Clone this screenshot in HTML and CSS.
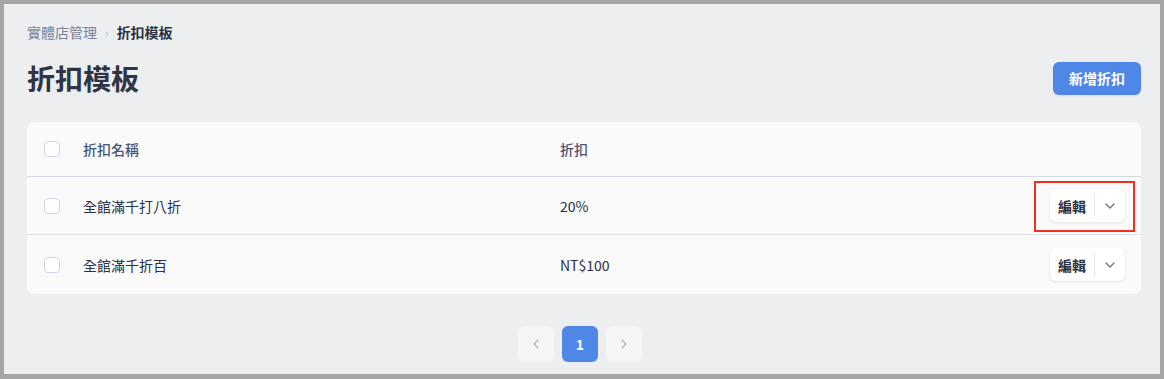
FILE: index.html
```html
<!DOCTYPE html>
<html>
<head>
    <meta charset="UTF-8">
    <title>折扣模板</title>
    <link rel="stylesheet" href="styles.css">
</head>
<body>
    <div class="frame">
        <div class="page">
            <div class="breadcrumb">
                <span class="crumb">實體店管理</span>
                <span class="crumb-sep">›</span>
                <span class="crumb current">折扣模板</span>
            </div>
            <div class="page-head">
                <h1 class="title">折扣模板</h1>
                <button class="btn-primary">新增折扣</button>
            </div>

            <div class="card">
                <div class="row head">
                    <span class="check"></span>
                    <span class="cell">折扣名稱</span>
                    <span class="cell">折扣</span>
                    <span></span>
                </div>
                <div class="row">
                    <span class="check"></span>
                    <span class="cell">全館滿千打八折</span>
                    <span class="cell">20%</span>
                    <div class="actions highlight">
                        <button class="act-main">編輯</button>
                        <button class="act-more">
                            <svg width="10" height="6" viewBox="0 0 10 6"><path d="M1 1l4 4 4-4" fill="none" stroke="#6b7280" stroke-width="1.3" stroke-linecap="round" stroke-linejoin="round"/></svg>
                        </button>
                    </div>
                </div>
                <div class="row">
                    <span class="check"></span>
                    <span class="cell">全館滿千折百</span>
                    <span class="cell">NT$100</span>
                    <div class="actions">
                        <button class="act-main">編輯</button>
                        <button class="act-more">
                            <svg width="10" height="6" viewBox="0 0 10 6"><path d="M1 1l4 4 4-4" fill="none" stroke="#6b7280" stroke-width="1.3" stroke-linecap="round" stroke-linejoin="round"/></svg>
                        </button>
                    </div>
                </div>
            </div>

            <div class="pager">
                <button class="pg">
                    <svg width="6" height="10" viewBox="0 0 6 10"><path d="M5 1L1 5l4 4" fill="none" stroke="#b4b9c6" stroke-width="1.3" stroke-linecap="round" stroke-linejoin="round"/></svg>
                </button>
                <button class="pg active">1</button>
                <button class="pg">
                    <svg width="6" height="10" viewBox="0 0 6 10"><path d="M1 1l4 4-4 4" fill="none" stroke="#b4b9c6" stroke-width="1.3" stroke-linecap="round" stroke-linejoin="round"/></svg>
                </button>
            </div>
        </div>
    </div>
</body>
</html>
```

FILE: styles.css
```css
html, body{
    margin:0;
    padding:0;
}
body{
    font-family:"Noto Sans CJK TC", "Noto Sans", sans-serif;
    color:#2d3142;
    background:#a6a6a6;
}
button{
    font-family:inherit;
    border:0;
    cursor:pointer;
    padding:0;
}
.frame{
    box-sizing:border-box;
    width:1164px;
    height:379px;
    border:4px solid #a6a6a6;
    border-bottom-width:5px;
    background:#edeef0;
    overflow:hidden;
}
.page{
    padding:18px 19px 0 23px;
}
.breadcrumb{
    display:flex;
    align-items:center;
    gap:8px;
    height:20px;
    font-size:14px;
}
.crumb{
    color:#7b8498;
}
.crumb-sep{
    color:#b8bdc8;
    font-size:12px;
}
.crumb.current{
    color:#2d3142;
    font-weight:700;
}
.page-head{
    display:flex;
    align-items:center;
    justify-content:space-between;
    height:36px;
    margin-top:18px;
}
.title{
    margin:0;
    font-size:28px;
    font-weight:700;
    color:#2f3545;
    line-height:36px;
}
.btn-primary{
    width:88px;
    height:33px;
    border-radius:6px;
    background:#4f87e6;
    color:#fff;
    font-size:14px;
    font-weight:700;
    box-shadow:0 1px 2px rgba(0,0,0,0.08);
}
.card{
    margin-top:26px;
    background:#fafafa;
    border-radius:7px;
}
.row{
    display:grid;
    grid-template-columns:39px 477px 1fr auto;
    align-items:center;
    height:57px;
    padding:0 16px 0 17px;
    border-bottom:1px solid #dfe3ea;
    font-size:14px;
}
.row:last-child{
    border-bottom:0;
    height:59px;
}
.row.head{
    height:54px;
    border-bottom-color:#d4dbe6;
}
.row.head .cell{
    color:#4b5576;
    font-weight:500;
}
.check{
    box-sizing:border-box;
    width:16px;
    height:16px;
    border:1px solid #ccd5e2;
    border-radius:4px;
    background:#fff;
}
.actions{
    position:relative;
    display:flex;
    align-items:center;
    height:33px;
    background:#fff;
    border-radius:6px;
    box-shadow:0 1px 3px rgba(0,0,0,0.10);
}
.highlight::after{
    content:"";
    position:absolute;
    left:-16px;
    right:-10px;
    top:-8px;
    bottom:-10px;
    border:2px solid #f0301c;
}
.act-main{
    width:45px;
    height:25px;
    background:transparent;
    font-size:14px;
    font-weight:700;
    color:#2d3142;
    border-right:1px solid #e6e8ec;
}
.act-more{
    width:30px;
    height:33px;
    background:transparent;
    display:flex;
    align-items:center;
    justify-content:center;
}
.pager{
    display:flex;
    justify-content:center;
    gap:8px;
    margin-top:32px;
    padding-right:8px;
}
.pg{
    width:36px;
    height:36px;
    border-radius:6px;
    background:#f5f5f6;
    display:flex;
    align-items:center;
    justify-content:center;
    font-size:14px;
    font-weight:700;
    color:#fff;
}
.pg.active{
    background:#4f87e6;
}
```
